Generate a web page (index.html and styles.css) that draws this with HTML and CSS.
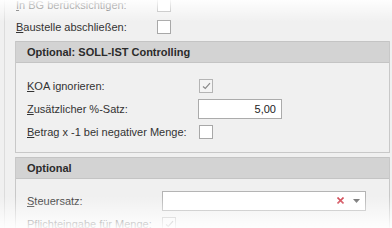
FILE: index.html
```html
<!DOCTYPE html>
<html lang="de">
<head>
    <meta charset="UTF-8">
    <title>Baustelle Einstellungen</title>
    <link rel="stylesheet" href="styles.css">
</head>
<body>
    <div class="panel">
        <div class="top-rows">
            <div class="row">
                <label class="lbl"><u>I</u>n BG berücksichtigen:</label>
                <span class="chk"></span>
            </div>
            <div class="row">
                <label class="lbl"><u>B</u>austelle abschließen:</label>
                <span class="chk"></span>
            </div>
        </div>

        <section class="group group-controlling">
            <div class="group-head">Optional: SOLL-IST Controlling</div>
            <div class="group-body">
                <div class="row">
                    <label class="lbl"><u>K</u>OA ignorieren:</label>
                    <span class="chk checked">
                        <svg width="9" height="8" viewBox="0 0 9 8"><path d="M1 4.5 L3.3 6.5 L8 1.2" fill="none" stroke="#8a8a8a" stroke-width="1.2"/></svg>
                    </span>
                </div>
                <div class="row">
                    <label class="lbl"><u>Z</u>usätzlicher %-Satz:</label>
                    <input class="num" type="text" value="5,00">
                </div>
                <div class="row">
                    <label class="lbl"><u>B</u>etrag x -1 bei negativer Menge:</label>
                    <span class="chk"></span>
                </div>
            </div>
        </section>

        <section class="group group-tax">
            <div class="group-head">Optional</div>
            <div class="group-body">
                <div class="row">
                    <label class="lbl"><u>S</u>teuersatz:</label>
                    <div class="combo">
                        <svg class="clear" width="7" height="7" viewBox="0 0 7 7"><path d="M0.5 0.5 L6.5 6.5 M6.5 0.5 L0.5 6.5" stroke="#d0424f" stroke-width="1.6"/></svg>
                        <svg class="arrow" width="7" height="4" viewBox="0 0 7 4"><path d="M0 0 H7 L3.5 4 Z" fill="#707070"/></svg>
                    </div>
                </div>
                <div class="row">
                    <label class="lbl"><u>P</u>flichteingabe für Menge:</label>
                    <span class="chk checked">
                        <svg width="9" height="8" viewBox="0 0 9 8"><path d="M1 4.5 L3.3 6.5 L8 1.2" fill="none" stroke="#8a8a8a" stroke-width="1.2"/></svg>
                    </span>
                </div>
            </div>
        </section>
    </div>
    <div class="fade-top"></div>
    <div class="fade-bottom"></div>
</body>
</html>
```

FILE: styles.css
```css
body {
    font-family: "Liberation Sans", Arial, sans-serif;
    font-size: 11px;
    color: #333;
    background-color: #f0f0f0;
    margin: 0;
    overflow: hidden;
    height: 228px;
}
.panel {
    margin: -6px 0 0 4px;
    width: 375px;
    padding: 0 11px 0 10px;
    border-left: 1px solid #dcdcdc;
    border-right: 1px solid #dcdcdc;
    height: 234px;
    overflow: hidden;
}
.row {
    display: flex;
    align-items: center;
    height: 22px;
}
.lbl {
    flex: none;
}
.lbl u {
    text-decoration: underline;
}
.top-rows .row {
    padding-left: 1px;
}
.top-rows .lbl {
    width: 141px;
}
.chk {
    display: flex;
    align-items: center;
    justify-content: center;
    width: 12px;
    height: 12px;
    border: 1px solid #a8a8a8;
    background-color: #fff;
    box-sizing: content-box;
}
.chk.checked {
    background-color: #f4f4f4;
    border-color: #b4b4b4;
}
.group {
    margin-top: 3px;
    border: 1px solid #c8c8c8;
    border-top: none;
}
.group-tax {
    margin-top: 4px;
}
.group-head {
    height: 20px;
    line-height: 20px;
    border-top: 1px solid #c4c4c4;
    border-bottom: 1px solid #c4c4c4;
    background-color: #d3d3d3;
    padding-left: 11px;
    font-weight: bold;
    color: #2b2b2b;
}
.group-body {
    padding: 11px 11px 9px 11px;
}
.group-body .row {
    height: 23px;
}
.group-controlling .lbl {
    width: 172px;
}
.num {
    width: 84px;
    height: 20px;
    box-sizing: border-box;
    margin: 0 0 0 -1px;
    border: 1px solid #ababab;
    background-color: #fff;
    font-family: inherit;
    font-size: 11px;
    color: #222;
    text-align: right;
    padding: 0 5px 0 0;
    outline: none;
}
.group-tax .group-body {
    padding-top: 10px;
}
.group-tax .lbl {
    width: 135px;
}
.combo {
    display: flex;
    align-items: center;
    justify-content: flex-end;
    gap: 9px;
    width: 204px;
    height: 20px;
    box-sizing: border-box;
    border: 1px solid #b4b4b4;
    background-color: #fff;
    padding-right: 5px;
}
.fade-top {
    position: absolute;
    top: 0;
    left: 0;
    right: 0;
    height: 22px;
    background: linear-gradient(to bottom, rgba(255,255,255,0.92), rgba(255,255,255,0));
}
.fade-bottom {
    position: absolute;
    top: 196px;
    left: 0;
    right: 0;
    height: 32px;
    background: linear-gradient(to bottom, rgba(255,255,255,0), rgba(255,255,255,0.9));
}
```
